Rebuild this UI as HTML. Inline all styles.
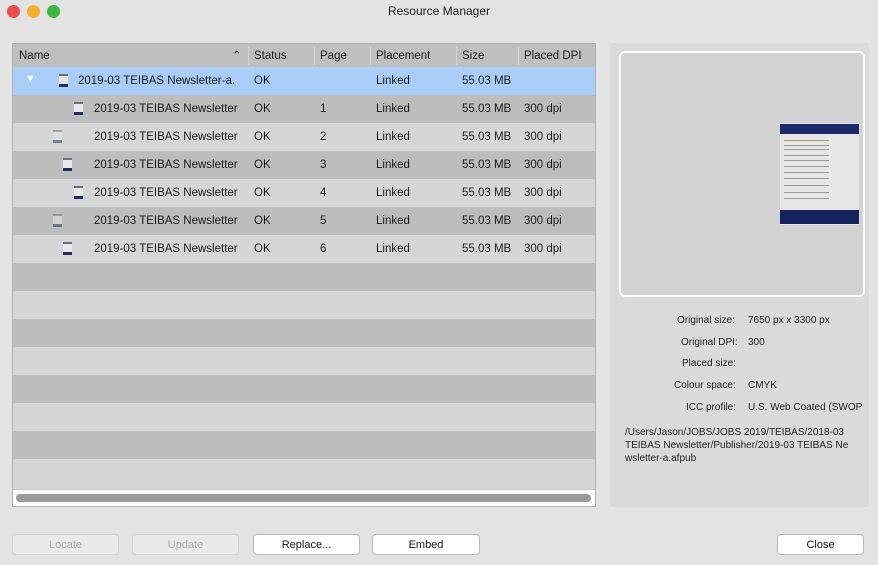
<!DOCTYPE html>
<html><head><style>
*{box-sizing:border-box;margin:0;padding:0}
body{width:878px;height:565px;background:#e3e3e3;font-family:"Liberation Sans",sans-serif;font-size:11.5px;color:#1a1a1a;position:relative;overflow:hidden}
.abs{position:absolute}
.dot{position:absolute;top:5px;width:13px;height:13px;border-radius:50%}
.title{position:absolute;top:4px;left:0;width:878px;text-align:center;font-size:12px;color:#222}
.table{position:absolute;left:12px;top:43px;width:584px;height:464px;border:1px solid #b0b0b0;background:#d6d6d6;overflow:hidden}
.row{position:absolute;left:0;width:584px;height:28px}
.row span{position:absolute;top:8px;white-space:nowrap}
.hdr{background:#bfbfbf;height:23px;top:0}
.hdr span{top:6px}
.sep{position:absolute;top:3px;width:1px;height:18px;background:#d6d6d6}
.btn{position:absolute;top:534px;height:21px;border-radius:4px;text-align:center;line-height:20px;font-size:11px}
.en{background:#fff;border:1px solid #b8b8b8;color:#111}
.dis{background:#eaeaea;border:1px solid #d4d4d4;color:#a8a8a8}
.ico{position:absolute;top:7px;width:9px;height:13px;background:#e8e8e8;border-top:2px solid #6a7080}
.ico:after{content:"";position:absolute;left:0;bottom:0;width:9px;height:3px;background:#1f2f60}
.info{position:absolute;font-size:10px;color:#222}
.ln{position:absolute;left:784px;height:1px;background:#9a9a9a}
</style></head><body>
<div class="dot" style="left:7px;background:#ee4b4b"></div>
<div class="dot" style="left:27px;background:#f4b02c"></div>
<div class="dot" style="left:47px;background:#3cb93c"></div>
<div class="title">Resource Manager</div>

<div class="table">
<div class="row hdr"><span style="left:6px">Name</span><span style="left:219px;top:4px">&#8963;</span><div class="sep" style="left:235px"></div><span style="left:241px">Status</span><div class="sep" style="left:301px"></div><span style="left:307px">Page</span><div class="sep" style="left:357px"></div><span style="left:363px">Placement</span><div class="sep" style="left:443px"></div><span style="left:449px">Size</span><div class="sep" style="left:505px"></div><span style="left:511px">Placed DPI</span></div>
<div class="row" style="top:23px;background:#a9cdf6"><span style="left:12px;top:6px;color:#fff;font-size:11px">&#9660;</span><div class="ico" style="left:46px"></div><span style="left:65px">2019-03 TEIBAS Newsletter-a.</span><span style="left:241px">OK</span><span style="left:363px">Linked</span><span style="left:449px">55.03 MB</span></div>
<div class="row" style="top:51px;background:#bdbdbd"><div class="ico" style="left:61px"></div><span style="left:81px">2019-03 TEIBAS Newsletter</span><span style="left:241px">OK</span><span style="left:307px">1</span><span style="left:363px">Linked</span><span style="left:449px">55.03 MB</span><span style="left:511px">300 dpi</span></div>
<div class="row" style="top:79px;background:#d6d6d6"><div class="ico" style="left:40px;opacity:.5"></div><span style="left:81px">2019-03 TEIBAS Newsletter</span><span style="left:241px">OK</span><span style="left:307px">2</span><span style="left:363px">Linked</span><span style="left:449px">55.03 MB</span><span style="left:511px">300 dpi</span></div>
<div class="row" style="top:107px;background:#bdbdbd"><div class="ico" style="left:50px"></div><span style="left:81px">2019-03 TEIBAS Newsletter</span><span style="left:241px">OK</span><span style="left:307px">3</span><span style="left:363px">Linked</span><span style="left:449px">55.03 MB</span><span style="left:511px">300 dpi</span></div>
<div class="row" style="top:135px;background:#d6d6d6"><div class="ico" style="left:61px"></div><span style="left:81px">2019-03 TEIBAS Newsletter</span><span style="left:241px">OK</span><span style="left:307px">4</span><span style="left:363px">Linked</span><span style="left:449px">55.03 MB</span><span style="left:511px">300 dpi</span></div>
<div class="row" style="top:163px;background:#bdbdbd"><div class="ico" style="left:40px;opacity:.5"></div><span style="left:81px">2019-03 TEIBAS Newsletter</span><span style="left:241px">OK</span><span style="left:307px">5</span><span style="left:363px">Linked</span><span style="left:449px">55.03 MB</span><span style="left:511px">300 dpi</span></div>
<div class="row" style="top:191px;background:#d6d6d6"><div class="ico" style="left:50px"></div><span style="left:81px">2019-03 TEIBAS Newsletter</span><span style="left:241px">OK</span><span style="left:307px">6</span><span style="left:363px">Linked</span><span style="left:449px">55.03 MB</span><span style="left:511px">300 dpi</span></div>
<div class="row" style="top:219px;background:#bdbdbd"></div>
<div class="row" style="top:247px;background:#d6d6d6"></div>
<div class="row" style="top:275px;background:#bdbdbd"></div>
<div class="row" style="top:303px;background:#d6d6d6"></div>
<div class="row" style="top:331px;background:#bdbdbd"></div>
<div class="row" style="top:359px;background:#d6d6d6"></div>
<div class="row" style="top:387px;background:#bdbdbd"></div>
<div class="row" style="top:415px;background:#d6d6d6;height:30px"></div>
<div class="row" style="top:445px;height:19px;background:#fbfbfb;border-top:1px solid #c8c8c8"><div class="abs" style="left:3px;top:4px;width:575px;height:8px;border-radius:4px;background:#9a9a9a"></div></div>
</div>

<div class="abs" style="left:610px;top:43px;width:259px;height:464px;background:#dadada;border-radius:3px"></div>
<div class="abs" style="left:619px;top:51px;width:246px;height:246px;background:#d3d3d3;border:2px solid #fafafa;border-radius:6px"></div>
<div class="abs" style="left:780px;top:123px;width:79px;height:102px;background:#e6e6e6"></div>
<div class="abs" style="left:780px;top:124px;width:79px;height:10px;background:#1b2a6b"></div>
<div class="abs" style="left:780px;top:210px;width:79px;height:14px;background:#12255e"></div>
<div class="ln" style="top:140px;width:45px;background:#b09a60"></div>
<div class="ln" style="top:145px;width:45px"></div><div class="ln" style="top:149px;width:45px"></div>
<div class="ln" style="top:155px;width:45px"></div><div class="ln" style="top:160px;width:45px"></div>
<div class="ln" style="top:166px;width:45px"></div><div class="ln" style="top:172px;width:45px"></div>
<div class="ln" style="top:178px;width:45px"></div><div class="ln" style="top:185px;width:45px"></div>
<div class="ln" style="top:192px;width:45px"></div><div class="ln" style="top:198px;width:45px"></div>

<div class="info" style="left:677px;top:315px">Original size:</div><div class="info" style="left:748px;top:315px">7650 px x 3300 px</div>
<div class="info" style="left:681px;top:337px">Original DPI:</div><div class="info" style="left:748px;top:337px">300</div>
<div class="info" style="left:682px;top:358px">Placed size:</div>
<div class="info" style="left:674px;top:380px">Colour space:</div><div class="info" style="left:748px;top:380px">CMYK</div>
<div class="info" style="left:686px;top:402px">ICC profile:</div><div class="info" style="left:748px;top:402px;white-space:nowrap">U.S. Web Coated (SWOP</div>
<div class="info" style="left:625px;top:426px;line-height:13px;white-space:nowrap">/Users/Jason/JOBS/JOBS 2019/TEIBAS/2018-03<br>TEIBAS Newsletter/Publisher/2019-03 TEIBAS Ne<br>wsletter-a.afpub</div>

<div class="btn dis" style="left:12px;width:107px">Locate</div>
<div class="btn dis" style="left:132px;width:107px">Update</div>
<div class="btn en" style="left:253px;width:107px">Replace...</div>
<div class="btn en" style="left:372px;width:108px">Embed</div>
<div class="btn en" style="left:777px;width:87px">Close</div>
</body></html>
